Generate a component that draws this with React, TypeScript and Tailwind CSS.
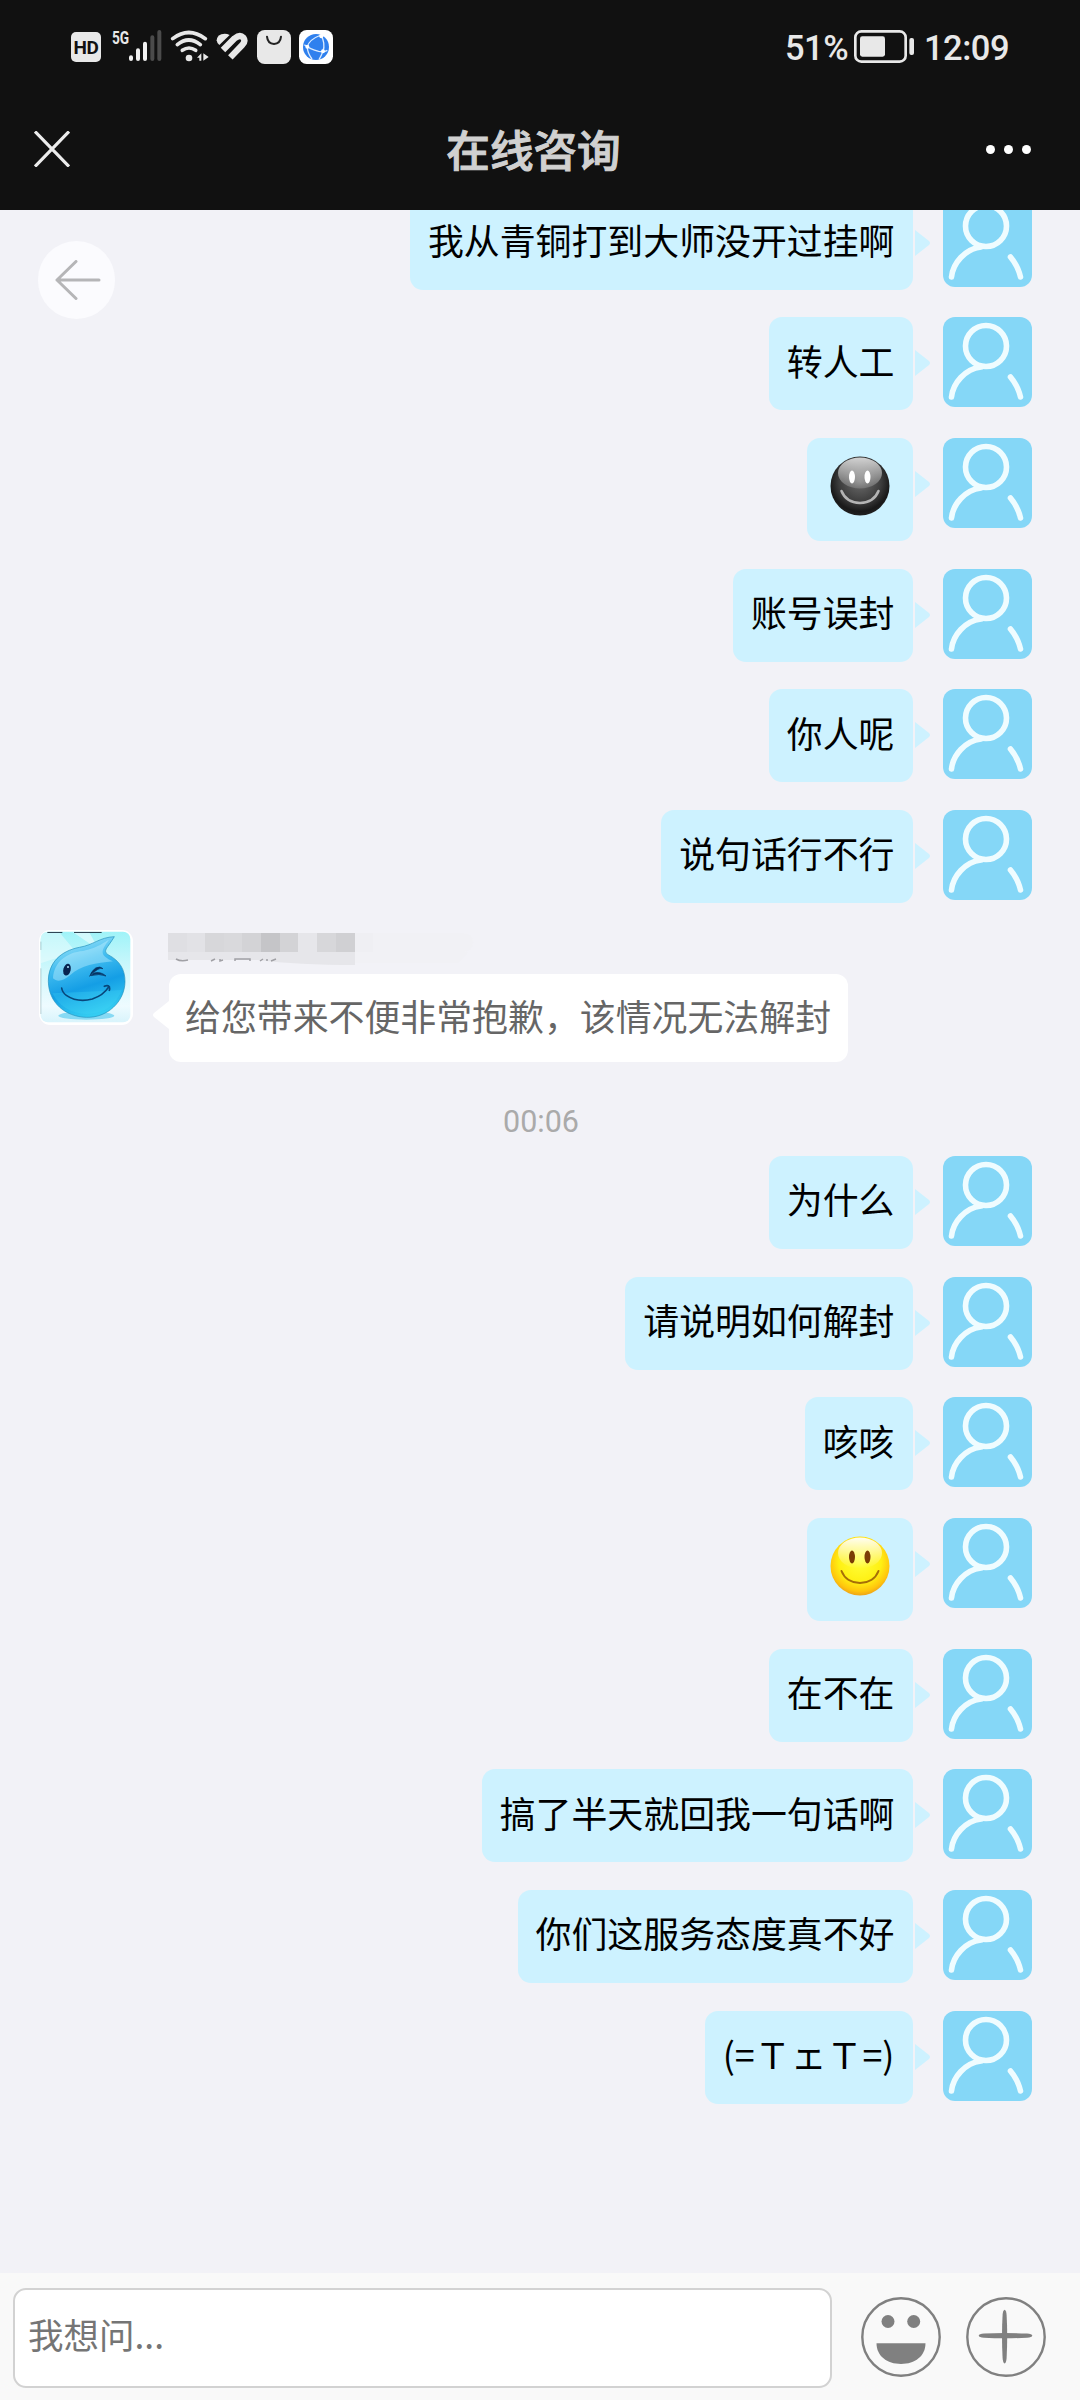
import React from "react";

type Message = { text?: string; face?: "dark" | "yellow" };

const earlier: Message[] = [
  { text: "我从青铜打到大师没开过挂啊" },
  { text: "转人工" },
  { face: "dark" },
  { text: "账号误封" },
  { text: "你人呢" },
  { text: "说句话行不行" },
];

const later: Message[] = [
  { text: "为什么" },
  { text: "请说明如何解封" },
  { text: "咳咳" },
  { face: "yellow" },
  { text: "在不在" },
  { text: "搞了半天就回我一句话啊" },
  { text: "你们这服务态度真不好" },
  { text: "(=ＴェＴ=)" },
];

function StatusBar() {
  return (
    <div className="flex h-[92px] items-start justify-between pt-[30px] pr-[71px] pl-[71px] font-['Roboto',sans-serif] text-[#e8e8e8]">
      <div className="flex items-start">
        <div className="mt-[2px] flex h-[30px] w-[30px] items-center justify-center rounded-[5px] bg-[#e8e8e8] text-[19px] leading-none font-bold tracking-[-0.5px] text-[#111]">
          HD
        </div>
        <div className="relative ml-[11px] h-9 w-[50px]">
          <svg viewBox="156 45 150 108" className="h-9 w-[50px]">
            <g strokeWidth="12" strokeLinecap="round">
              <path d="M213 127V132M234 106V132M255 86V132" stroke="#f0f0f0" />
              <path d="M277 67V132M298 51V132" stroke="#4b4b4b" />
            </g>
          </svg>
          <span className="absolute top-0 left-0 origin-left scale-x-[0.72] text-[19px] leading-[16px] font-bold">5G</span>
        </div>
        <svg viewBox="330 45 120 108" className="ml-2 h-9 w-10" fill="none" stroke="#e8e8e8">
          <path d="M338 71Q386 34 436 71" strokeWidth="11" strokeLinecap="round" />
          <path d="M352 89Q386 61 421 89" strokeWidth="11" strokeLinecap="round" />
          <path d="M367 106Q387 92 407 106" strokeWidth="11" strokeLinecap="round" />
          <circle cx="387" cy="129" r="10" fill="#e8e8e8" stroke="none" />
          <path d="M411 128L424 115V137H418V128ZM430 115V137L446 126Z" fill="#e8e8e8" stroke="none" />
        </svg>
        <svg viewBox="468 45 96 108" className="ml-[6px] h-9 w-8">
          <path d="M478 90L509 60Q497 54 484 58Q471 63 470 76Q471 85 478 90Z" fill="#e8e8e8" />
          <path
            d="M489 105L524 70Q540 57 550 68Q558 79 546 91L511 127"
            fill="none"
            stroke="#e8e8e8"
            strokeWidth="19"
            strokeLinejoin="round"
          />
        </svg>
        <svg viewBox="591 45 102 108" className="ml-[9px] h-9 w-[34px]">
          <rect x="591" y="45" width="102" height="102" rx="23" fill="#e8e8e8" />
          <path d="M621 65Q623 86 642 87Q661 86 663 65" fill="none" stroke="#222" strokeWidth="6" strokeLinecap="round" />
        </svg>
        <svg viewBox="717 45 102 108" className="ml-2 h-9 w-[34px]">
          <rect x="717" y="45" width="102" height="102" rx="23" fill="#fff" />
          <circle cx="768" cy="96" r="39" fill="#2f80ee" />
          <g fill="none" stroke="#dcecff" strokeWidth="4">
            <path d="M783 60Q746 74 742 96Q742 113 756 132M733 89Q750 102 776 109Q793 112 802 106M783 60Q797 86 789 109Q783 124 777 134" />
          </g>
          <circle cx="742" cy="95" r="6" fill="#fff" />
          <circle cx="784" cy="64" r="6" fill="#fff" />
          <circle cx="789" cy="109" r="6" fill="#fff" />
        </svg>
      </div>
      <div className="flex items-start text-[34.5px] leading-[36px] font-medium">
        <span className="w-[69px] tracking-[-0.5px]">51%</span>
        <svg viewBox="255 45 180 108" className="h-9 w-[60px]">
          <rect x="259" y="49" width="151" height="91" rx="18" fill="none" stroke="#e8e8e8" strokeWidth="8" />
          <rect x="273" y="64" width="75" height="61" rx="7" fill="#e8e8e8" />
          <rect x="421" y="69" width="14" height="51" rx="6" fill="#e8e8e8" />
        </svg>
        <span className="ml-[10px] tracking-[-0.5px]">12:09</span>
      </div>
    </div>
  );
}

function UserAvatar() {
  return (
    <svg viewBox="0 0 89 90" className="h-[90px] w-[89px] rounded-[12px] bg-[#85d7f7]" fill="none" stroke="#effcff" strokeWidth="5.6" strokeLinecap="round">
      <circle cx="43" cy="29" r="20.5" />
      <path d="M38 50C22 52 10 66 8.500 80" />
      <path d="M67.500 60Q75 69 77.500 80" />
    </svg>
  );
}

function Face({ dark }: { dark: boolean }) {
  const id = dark ? "faceDark" : "faceYellow";
  return (
    <svg viewBox="0 0 60 60" className="-ml-px h-[60px] w-[60px]">
      <defs>
        <radialGradient id={id} cx="0.5" cy="0.42" r="0.6">
          <stop offset="0" stopColor={dark ? "#6c6c6c" : "#ffff3a"} />
          <stop offset="0.6" stopColor={dark ? "#3c3c3c" : "#fff013"} />
          <stop offset="0.85" stopColor={dark ? "#191919" : "#ffc50d"} />
          <stop offset="1" stopColor={dark ? "#222" : "#e99a1c"} />
        </radialGradient>
        <linearGradient id={id + "Shine"} x1="0" y1="0" x2="0" y2="1">
          <stop offset="0" stopColor="#fff" stopOpacity={dark ? 0.78 : 0.95} />
          <stop offset="1" stopColor="#fff" stopOpacity={dark ? 0.15 : 0} />
        </linearGradient>
      </defs>
      <circle cx="30" cy="30" r="29.500" fill={"url(#" + id + ")"} />
      <ellipse cx="30" cy="17" rx="22" ry="15.500" fill={"url(#" + id + "Shine)"} />
      <ellipse cx="22" cy="21" rx="3" ry="6.500" fill={dark ? "#fff" : "#7a3c05"} />
      <ellipse cx="37.500" cy="21" rx="3" ry="6.500" fill={dark ? "#fff" : "#7a3c05"} />
      <path d="M11.500 35Q16 46.500 30 47Q44 46.500 48.500 35" fill="none" stroke={dark ? "#b4b4b4" : "#a66f08"} strokeWidth={dark ? 2.6 : 2} strokeLinecap="round" />
    </svg>
  );
}

function OutgoingMessage({ text, face }: Message) {
  return (
    <div className="mb-[27.67px] flex items-start justify-end pr-[48px]">
      {face ? (
        <div className="flex h-[103px] w-[106px] justify-center rounded-[13px] bg-[#cdf2ff] pt-[18px]">
          <Face dark={face === "dark"} />
        </div>
      ) : (
        <div className="h-[93px] rounded-[13px] bg-[#cdf2ff] pt-[16.5px] pr-[18.5px] pl-[18px] text-[35.9px] leading-[52px] whitespace-nowrap text-black">
          {text}
        </div>
      )}
      <svg viewBox="0 0 16 26" className="mt-[33px] mr-[12px] ml-[2px] h-[26px] w-4">
        <path d="M0 0L14 11Q16 13 14 15L0 26Z" fill="#cdf2ff" />
      </svg>
      <UserAvatar />
    </div>
  );
}

function AgentAvatar() {
  return (
    <svg viewBox="0 0 282 285" className="h-[95px] w-[94px]">
      <defs>
        <linearGradient id="agentBg" x1="0" y1="0" x2="0" y2="1">
          <stop offset="0" stopColor="#9df3f8" />
          <stop offset="0.45" stopColor="#d3f8fc" />
          <stop offset="0.8" stopColor="#eefbff" />
          <stop offset="1" stopColor="#d5f3fb" />
        </linearGradient>
        <linearGradient id="agentDrop" x1="0.2" y1="0" x2="0.5" y2="1">
          <stop offset="0" stopColor="#a9e8fa" />
          <stop offset="0.35" stopColor="#42bdf0" />
          <stop offset="0.65" stopColor="#149ee5" />
          <stop offset="1" stopColor="#35cdf2" />
        </linearGradient>
        <clipPath id="agentClip">
          <rect x="5" y="5" width="269" height="272" rx="22" />
        </clipPath>
      </defs>
      <rect width="282" height="285" rx="34" fill="#fff" />
      <g clipPath="url(#agentClip)">
        <rect width="282" height="285" fill="url(#agentBg)" />
        <path d="M5 5L60 5L110 65L5 100Z" fill="#fff" opacity="0.4" />
        <path d="M100 5H150L180 60Z" fill="#fff" opacity="0.5" />
        <path d="M25 7H70M105 7H188" stroke="#123" strokeWidth="3" />
        <path d="M5 35V60M5 115V252" stroke="#356a72" strokeWidth="2" />
        <ellipse cx="142" cy="257" rx="84" ry="12" fill="#61cdf0" opacity="0.7" />
        <path
          d="M226 20C205 55 190 62 207 74C244 93 258 120 258 155C257 216 204 264 142 262C78 260 29 218 28 154C28 98 65 63 121 52C164 45 181 22 226 20Z"
          fill="url(#agentDrop)"
          stroke="#2291bd"
          strokeWidth="2"
        />
        <path d="M42 145C45 96 83 67 132 63C181 52 198 34 210 29C184 65 182 75 222 94C172 99 126 105 93 136C73 153 55 158 42 145Z" fill="#c9f3ff" opacity="0.4" />
        <path d="M40 190Q140 185 248 180Q223 249 142 252Q71 249 40 190Z" fill="#48dcf7" opacity="0.25" />
      </g>
      <ellipse cx="84" cy="119" rx="11" ry="18" transform="rotate(14 84 119)" fill="#07234f" />
      <circle cx="87" cy="111" r="3" fill="#b4e8ff" />
      <path d="M192 116Q185 113 175 119Q162 126 152 139Q156 124 170 114Q184 107 192 116ZM164 129Q184 123 201 138Q181 130 156 137Z" fill="#083463" stroke="#083463" strokeWidth="2" />
      <path d="M68 174Q70 188 82 196Q116 219 160 207Q194 195 208 172M196 169Q206 164 211 170Q213 177 211 181" fill="none" stroke="#08467a" strokeWidth="5" strokeLinecap="round" />
    </svg>
  );
}

function MaskedName() {
  return (
    <div className="h-[41px] pl-[168px]">
      <div className="flex h-[19px]">
        <i className="w-[19px] bg-[#dfdfe3]" />
        <i className="w-[18px] bg-[#e2e2e6]" />
        <i className="w-[19px] bg-[#d7d7da]" />
        <i className="w-[18px] bg-[#d9d9dc]" />
        <i className="w-[19px] bg-[#d3d3d6]" />
        <i className="w-[19px] bg-[#c5c5c8]" />
        <i className="w-[18px] bg-[#d3d3d6]" />
        <i className="w-[19px] bg-[#e6e6ea]" />
        <i className="w-[19px] bg-[#d7d7da]" />
        <i className="w-[19px] bg-[#d0d0d3]" />
        <i className="w-[18px] bg-[#efeff3]" />
        <i className="w-[100px] rounded-r-full bg-[#f1f1f5]" />
      </div>
      <svg viewBox="0 0 300 14" className="h-[14px] w-[300px]">
        <path d="M0 0H187V13Q130 13 90 8H0Z" fill="#e6e6ea" />
        <path d="M187 0H300L290 11H187Z" fill="#f1f1f5" />
        <path d="M8 7Q13 10 20 8M43 9L47 7M52 7V9L55 8M67 9V7H82V9M92 9L95 7M99 7V9M103 9L108 7" fill="none" stroke="#a0a0a5" strokeWidth="1.500" />
      </svg>
    </div>
  );
}

export default function App() {
  return (
    <div className="flex h-[2400px] w-[1080px] flex-col overflow-hidden bg-[#f2f2f7] font-['Noto_Sans_CJK_SC',sans-serif]">
      <header className="h-[210px] shrink-0 bg-[#111]">
        <StatusBar />
        <div className="flex h-[114px] items-center justify-between pr-[49px] pl-[34px]">
          <svg viewBox="0 0 36 36" className="h-9 w-9" stroke="#ececec" strokeWidth="3.200">
            <path d="M1 0.500L35 35.500M35 0.500L1 35.500" />
          </svg>
          <h1 className="mb-[2px] ml-[11px] text-[43.6px] leading-[60px] font-medium text-[#d0d0d0] [-webkit-text-stroke:1px_#d0d0d0]">在线咨询</h1>
          <div className="flex gap-[9px]">
            <i className="h-[9px] w-[9px] rounded-full bg-white" />
            <i className="h-[9px] w-[9px] rounded-full bg-white" />
            <i className="h-[9px] w-[9px] rounded-full bg-white" />
          </div>
        </div>
      </header>

      <main className="relative flex h-[2063px] shrink-0 flex-col overflow-hidden">
        <button className="absolute top-[31px] left-[38px] flex h-[78px] w-[77px] items-center justify-center rounded-full bg-[#fbfbfe]">
          <svg viewBox="0 0 46 40" className="ml-[2px] h-10 w-[46px]" fill="none" stroke="#b5b5b7" strokeWidth="3" strokeLinecap="round" strokeLinejoin="round">
            <path d="M21 1.500L2 20L21 38.500M2 20H44" />
          </svg>
        </button>
        <section className="-mt-[13.4px] shrink-0">
          {earlier.map((m, i) => (
            <OutgoingMessage key={i} {...m} />
          ))}
        </section>
        <section className="relative mt-[2.4px] h-[133px] shrink-0">
          <MaskedName />
          <div className="flex pl-[152px]">
            <svg viewBox="0 0 17 28" className="mt-[27px] h-7 w-[17px]">
              <path d="M17 0L2 12Q0 14 2 16L17 28Z" fill="#fff" />
            </svg>
            <p className="h-[88px] w-[679px] rounded-[12px] bg-white pt-[15px] pl-4 text-[35.9px] leading-[52px] whitespace-nowrap text-[#666]">
              给您带来不便非常抱歉，该情况无法解封
            </p>
          </div>
          <div className="absolute -top-[3px] left-[39px]">
            <AgentAvatar />
          </div>
        </section>
        <time className="block h-[90px] shrink-0 pt-[38px] pl-[2px] text-center font-['Roboto',sans-serif] text-[30.5px] leading-[36px] text-[#aaa]">
          00:06
        </time>
        <section className="shrink-0">
          {later.map((m, i) => (
            <OutgoingMessage key={i} {...m} />
          ))}
        </section>
      </main>

      <footer className="flex h-[127px] shrink-0 items-start bg-[#f9f9f9] pt-[15px] pl-[13px]">
        <input
          placeholder="我想问..."
          className="h-[100px] w-[819px] rounded-[13px] border-2 border-[#d2d2d2] bg-white px-[13px] pb-[9px] text-[35.5px] text-black placeholder:text-[#757575] placeholder:opacity-100"
        />
        <svg viewBox="0 0 80 80" className="mt-[9px] ml-[29px] h-20 w-20">
          <circle cx="40" cy="40" r="38.700" fill="none" stroke="#808080" strokeWidth="2.400" />
          <circle cx="27" cy="24.500" r="6.500" fill="#808080" />
          <circle cx="52.700" cy="24.500" r="6.500" fill="#808080" />
          <path d="M15.500 46.300H64.500C64.500 59 54 67 40 67S15.500 59 15.500 46.300Z" fill="#808080" />
        </svg>
        <svg viewBox="0 0 80 80" className="mt-[9px] ml-[25px] h-20 w-20">
          <circle cx="40" cy="40" r="38.700" fill="none" stroke="#808080" strokeWidth="2.400" />
          <path d="M12.700 38.700Q13 37 18 36.600Q28 36 39 36T61 36.600Q66 37 66.300 38.700Q66 40.300 61 40.700Q50 41.300 39 41.300T18 40.700Q13 40.300 12.700 38.700Z" fill="#808080" />
          <path d="M38.600 12.800Q40.200 13 40.600 18Q41.200 28 41.200 39T40.600 61Q40.200 66 38.600 66.500Q37 66 36.600 61Q36 50 36 39T36.600 18Q37 13 38.600 12.800Z" fill="#808080" />
        </svg>
      </footer>
    </div>
  );
}
